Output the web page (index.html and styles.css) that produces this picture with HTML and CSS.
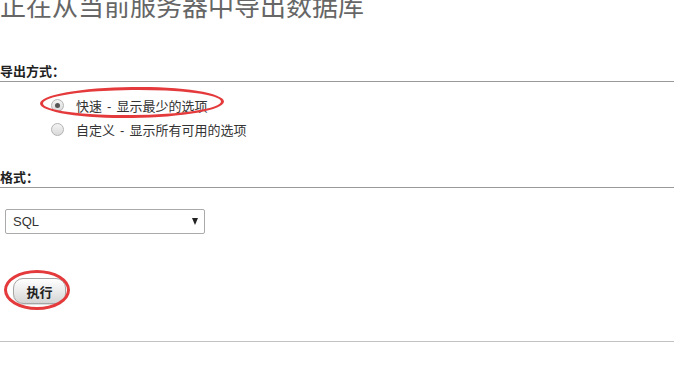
FILE: index.html
```html
<!DOCTYPE html>
<html lang="zh-CN">
<head>
<meta charset="utf-8">
<title>导出</title>
<link rel="stylesheet" href="styles.css">
</head>
<body>
  <h2 class="title">正在从当前服务器中导出数据库</h2>

  <div class="section-head">导出方式：</div>
  <div class="options">
    <label class="option">
      <input class="radio" type="radio" name="method" checked>
      <span class="opt-text">快速 - 显示最少的选项</span>
      <span class="mark mark-option"></span>
    </label>
    <label class="option">
      <input class="radio" type="radio" name="method">
      <span class="opt-text">自定义 - 显示所有可用的选项</span>
    </label>
  </div>

  <div class="section-head second">格式：</div>
  <div class="select">
    <span class="select-value">SQL</span>
    <span class="select-arrow"></span>
  </div>

  <div class="actions">
    <button class="btn" type="button">执行</button>
    <span class="mark mark-btn"></span>
  </div>

  <hr class="bottom-rule">
</body>
</html>
```
FILE: styles.css
```css
html, body {
  margin: 0;
  padding: 0;
  background: #fff;
}

body {
  font-family: "Liberation Sans", "Noto Sans CJK SC", sans-serif;
  font-size: 13px;
  color: #333;
  overflow: hidden;
}

.title {
  margin: -8px 0 0 0;
  height: 26px;
  font-family: "Noto Sans CJK SC", sans-serif;
  font-size: 26px;
  line-height: 26px;
  font-weight: normal;
  color: #666;
  white-space: nowrap;
}

.section-head {
  margin-top: 45px;
  font-family: "Noto Sans CJK SC", sans-serif;
  font-weight: bold;
  font-size: 13px;
  line-height: 16px;
  color: #222;
  padding-bottom: 2px;
  border-bottom: 1px solid #999;
}

.section-head.second {
  margin-top: 28px;
}

.options {
  margin-top: 11px;
}

.option {
  position: relative;
  display: flex;
  align-items: center;
  height: 24px;
  padding-left: 51px;
  gap: 12px;
}

.radio {
  appearance: none;
  -webkit-appearance: none;
  margin: 0;
  width: 13px;
  height: 13px;
  border-radius: 50%;
  border: 1px solid #b3b3b3;
  background: linear-gradient(#f4f4f4, #d9d9d9);
  box-sizing: border-box;
  position: relative;
  flex: none;
}

.radio:checked::after {
  content: "";
  position: absolute;
  left: 3px;
  top: 3px;
  width: 5px;
  height: 5px;
  border-radius: 50%;
  background: #555;
}

.opt-text {
  font-family: "Liberation Sans", "Noto Sans CJK SC", sans-serif;
  font-size: 13px;
  word-spacing: 1.5px;
  color: #333;
  white-space: nowrap;
}

.mark {
  position: absolute;
  border: 3px solid #e43a3c;
  border-radius: 50%;
  box-sizing: border-box;
  pointer-events: none;
}

.mark-option {
  left: 40px;
  top: -6px;
  width: 184px;
  height: 31px;
  transform: rotate(-0.6deg);
}

.select {
  margin: 21px 0 0 5px;
  width: 200px;
  height: 25px;
  box-sizing: border-box;
  border: 1px solid #aaa;
  border-radius: 2px;
  background: #fff;
  display: flex;
  align-items: center;
  justify-content: space-between;
  padding: 0 6px 0 7px;
}

.select-value {
  font-size: 13px;
  color: #333;
}

.select-arrow {
  width: 0;
  height: 0;
  border-left: 3.5px solid transparent;
  border-right: 3.5px solid transparent;
  border-top: 7px solid #222;
}

.actions {
  position: relative;
  margin-top: 44px;
  padding-left: 13px;
  height: 26px;
}

.btn {
  width: 53px;
  height: 26px;
  margin: 0;
  padding: 0;
  border: 1px solid #a5a5a5;
  border-radius: 10px;
  background: linear-gradient(#ffffff, #e9e9e9 55%, #d4d4d4);
  font-family: "Noto Sans CJK SC", sans-serif;
  font-weight: bold;
  font-size: 13px;
  color: #222;
  box-shadow: 0 1px 1px rgba(0,0,0,0.15);
}

.mark-btn {
  left: 4px;
  top: -8px;
  width: 66px;
  height: 40px;
}

.bottom-rule {
  margin: 37px 0 0 0;
  border: 0;
  border-top: 1px solid #c2c2c2;
  height: 0;
}
```
